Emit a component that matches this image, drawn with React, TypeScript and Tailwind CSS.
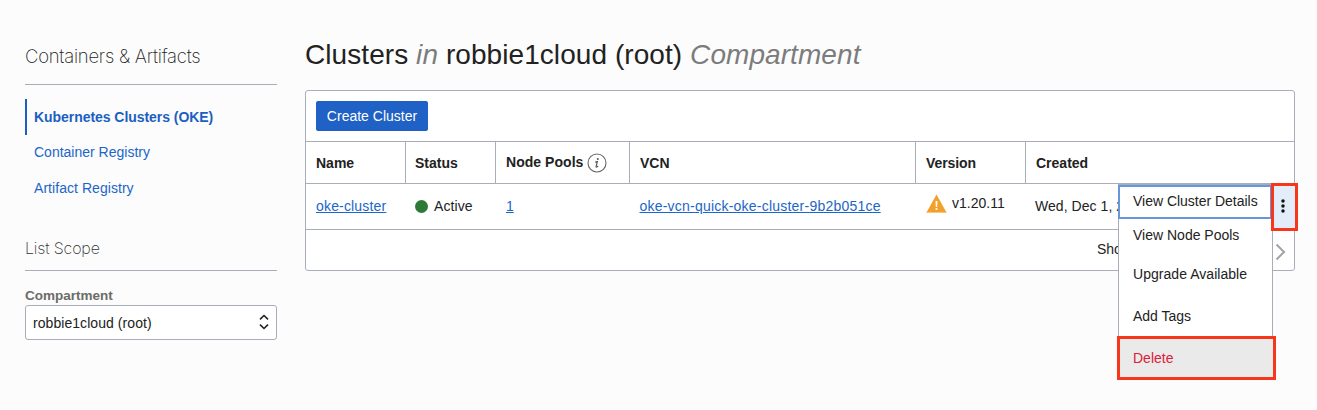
import React from "react";

const LINK = "text-[#1b66c9]";

function SideHeading({ children, className }: { children: React.ReactNode; className: string }) {
  return (
    <h2 className={`whitespace-nowrap border-b border-[#a8adb8] font-['Inter',sans-serif] font-extralight ${className}`}>
      {children}
    </h2>
  );
}

function Sidebar() {
  return (
    <aside className="w-[252px] shrink-0">
      <SideHeading className="h-[85px] pt-[42px] text-[18.5px] leading-7 tracking-[-0.25px] text-[#222]">
        Containers &amp; Artifacts
      </SideHeading>
      <nav className={`mt-[14px] flex flex-col text-[14px] ${LINK}`}>
        <a className="flex h-9 items-center border-l-2 border-[#1b5fc1] pl-[7px] font-bold text-[#1b5fc1]">
          <span className="tracking-[-0.05px]">Kubernetes Clusters (OKE)</span>
        </a>
        <a className="flex h-[35px] items-center pl-[9px]">Container Registry</a>
        <a className="flex h-9 items-center pl-[9px] tracking-[0.05px]">Artifact Registry</a>
      </nav>
      <SideHeading className="mt-[24px] h-[41px] pt-[5px] text-[16px] leading-[26px] tracking-[-0.15px] text-[#333]">
        List Scope
      </SideHeading>
      <label className="mt-[16px] block h-[18px] text-[13.5px] leading-[18px] font-bold text-[#6b6b68]">Compartment</label>
      <div className="flex h-[35px] items-center justify-between rounded-[3px] border border-[#a8adb8] bg-white pr-[7px] pl-[7px] text-[14px] text-[#222]">
        <span className="pt-[2px] tracking-[0.06px]">robbie1cloud (root)</span>
        <svg width="10" height="16" viewBox="0 0 10 16" fill="none" stroke="#222" strokeWidth="1.6" className="-mt-[2px]">
          <path d="M1 5.3 5 1.5 9 5.3M1 10.7 5 14.5 9 10.7" />
        </svg>
      </div>
    </aside>
  );
}

function InfoIcon() {
  return (
    <svg width="20" height="20" viewBox="0 0 20 20" fill="none">
      <circle cx="10" cy="10" r="9" stroke="#666" strokeWidth="1.1" />
      <circle cx="10.8" cy="5.9" r="1" fill="#555" />
      <path d="M8.2 9.1 10.4 8.5 9.1 13.3Q8.9 14.4 9.8 14.1L11.2 13" stroke="#555" strokeWidth="1.1" />
    </svg>
  );
}

function WarningIcon() {
  return (
    <svg width="21" height="19" viewBox="0 0 21 19">
      <path d="M10.5 0.5 20.5 18.5H0.5Z" fill="#f3a02b" />
      <path d="M0.5 18.5H20.5" stroke="#f6c77f" />
      <path d="M9.5 7h2l-.3 6H9.8Z" fill="#fff" />
      <circle cx="10.5" cy="15" r="1.1" fill="#fff" />
    </svg>
  );
}

const GRID = "grid grid-cols-[100px_90px_134px_286px_110px_1fr]";
const HEAD = "flex items-center border-r border-[#a8adb8] pl-[10px]";

function ClusterTable() {
  return (
    <section className="h-[181px] w-[990px] rounded-[3px] border border-[#a8adb8] bg-white text-[14px] text-[#222]">
      <div className="flex h-[50px] items-center pl-[10px]">
        <button className="h-[30px] w-[112px] rounded-[2px] bg-[#1f61c4] text-white">Create Cluster</button>
      </div>
      <div className={`${GRID} h-[43px] border-y border-[#a8adb8] font-bold`}>
        <div className={HEAD}><span className="pt-[2px]">Name</span></div>
        <div className={HEAD}><span className="-ml-px pt-[2px]">Status</span></div>
        <div className={`${HEAD} gap-[4px]`}>
          <span className="tracking-[0.04px]">Node Pools</span>
          <InfoIcon />
        </div>
        <div className={HEAD}><span className="pt-[2px]">VCN</span></div>
        <div className={HEAD}><span className="pt-[2px] tracking-[-0.1px]">Version</span></div>
        <div className="flex items-center pl-[10px]"><span className="pt-[2px]">Created</span></div>
      </div>
      <div className={`${GRID} h-[46px] items-center border-b border-[#a8adb8]`}>
        <a className={`pl-[10px] tracking-[0.17px] underline ${LINK}`}>oke-cluster</a>
        <div className="flex items-center gap-[6px] pl-[9px] tracking-[0.1px]">
          <span className="h-[13px] w-[13px] rounded-full bg-[#2c7a36]" />
          Active
        </div>
        <a className={`pl-[10px] underline ${LINK}`}>1</a>
        <a className={`whitespace-nowrap pl-[9.5px] tracking-[0.22px] underline ${LINK}`}>oke-vcn-quick-oke-cluster-9b2b051ce</a>
        <div className="flex items-center gap-[5px] pb-[6px] pl-[10px]">
          <WarningIcon />
          <span className="-mt-px">v1.20.11</span>
        </div>
        <div className="flex h-full items-center justify-between">
          <span className="whitespace-nowrap pl-[9px] tracking-[0.05px]">Wed, Dec 1, 2021</span>
          <RowActions />
        </div>
      </div>
      <div className="flex h-10 items-center justify-between pl-[791px] pr-[8px]">
        <span className="-mt-[2px]">Showing</span>
        <svg width="11" height="18" viewBox="0 0 11 18" fill="none" stroke="#a3a3a3" strokeWidth="2" className="mt-[4px]">
          <path d="M1.5 1.5 9 9 1.5 16.5" />
        </svg>
      </div>
    </section>
  );
}

function RowActions() {
  return (
    <div className="relative h-full w-[22px]">
      <button className="absolute -top-px -left-px z-10 flex h-12 w-[27px] items-center justify-center border-[3px] border-[#f8361b] bg-[#e2edf9] pr-[3px] pb-[2px]">
        <svg width="4" height="14" viewBox="0 0 4 14" fill="#111">
          <circle cx="2" cy="2" r="1.75" />
          <circle cx="2" cy="7" r="1.75" />
          <circle cx="2" cy="12" r="1.75" />
        </svg>
      </button>
    </div>
  );
}

function ActionMenu() {
  return (
    <div className="absolute top-[184px] left-[1118px] w-[155px] border border-b-0 border-[#a8adb8] bg-white text-[14px] text-[#222]">
      <div className="-ml-px flex h-[34px] w-[154px] items-center border-2 border-[#6697dc] pb-[2px] pl-[13px] tracking-[-0.02px] whitespace-nowrap">View Cluster Details</div>
      <div className="flex h-[33px] items-center pl-[14px]">View Node Pools</div>
      <div className="flex h-[45px] items-center pl-[14px] tracking-[0.04px]">Upgrade Available</div>
      <div className="flex h-[39px] items-center pl-[14px]">Add Tags</div>
      <div className="-ml-[2px] flex h-[44px] w-[159px] items-center border-[3px] border-[#f8361b] bg-[#eaeaea] pl-[13px] text-[#dc2038]">Delete</div>
    </div>
  );
}

export default function App() {
  return (
    <div className="relative flex h-[410px] w-[1317px] gap-[28px] overflow-hidden bg-[#fcfcfc] pl-[25px] font-['Liberation_Sans',Arial,sans-serif]">
      <Sidebar />
      <main className="w-[990px] shrink-0">
        <h1 className="h-[90px] pt-[37px] text-[28px] leading-9 tracking-[0.07px] whitespace-nowrap text-[#222]">
          Clusters <i className="text-[#7c7c7c]">in</i> robbie1cloud (root) <i className="text-[#7c7c7c]">Compartment</i>
        </h1>
        <ClusterTable />
      </main>
      <ActionMenu />
    </div>
  );
}
